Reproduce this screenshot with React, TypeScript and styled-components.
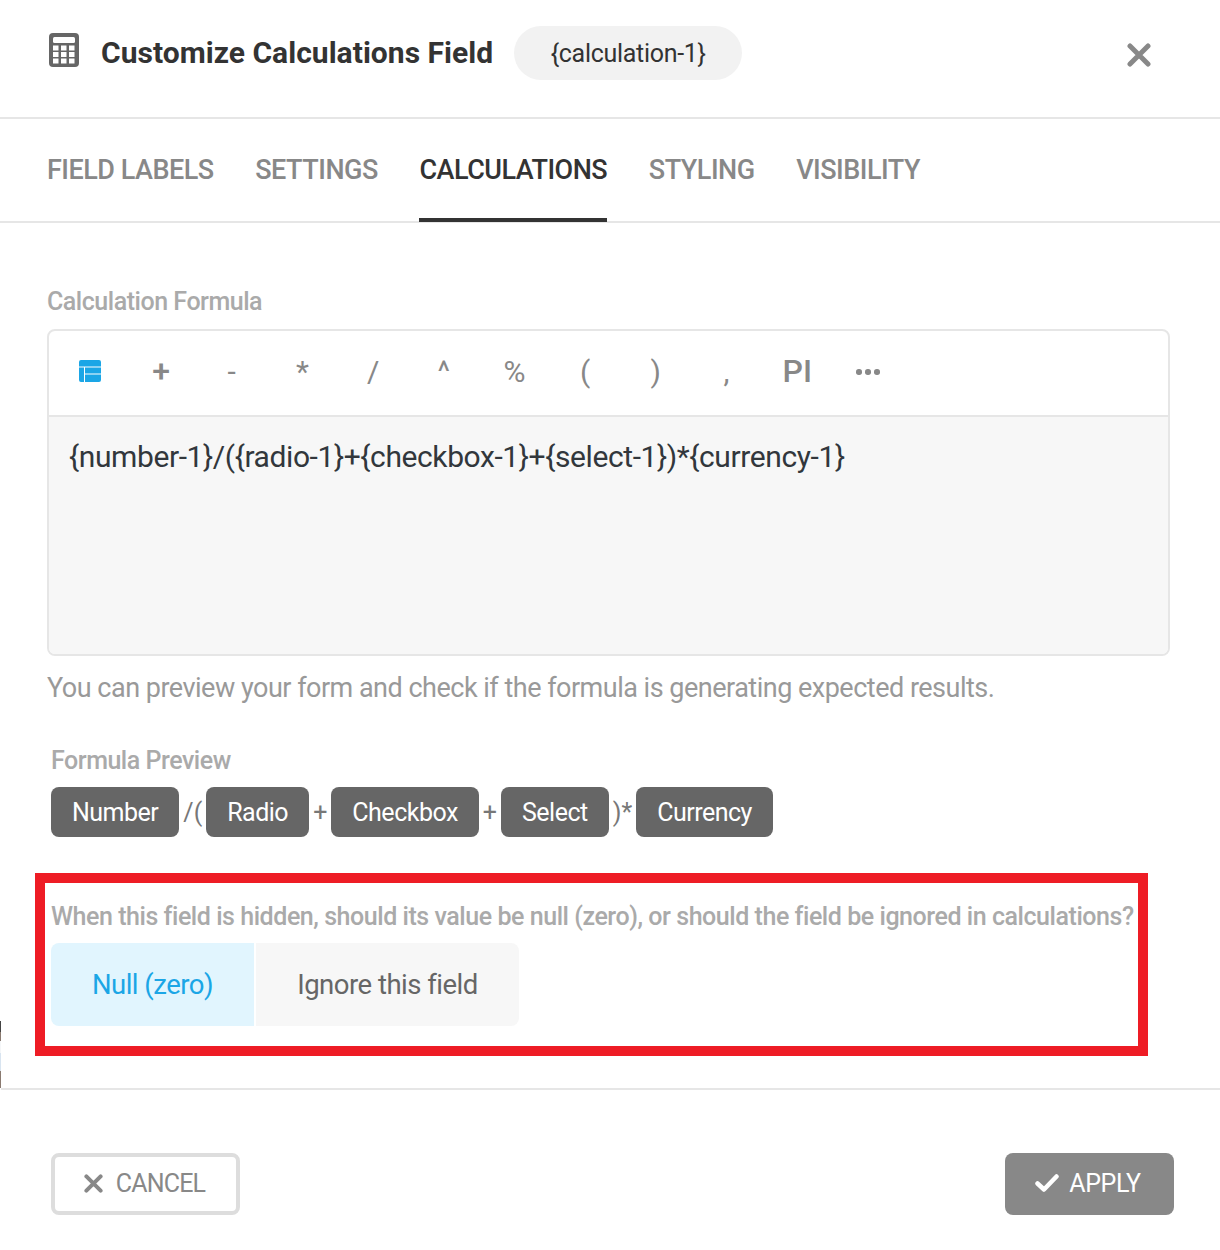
import React from "react";
import styled, { createGlobalStyle } from "styled-components";

const GlobalStyle = createGlobalStyle`
  html, body {
    margin: 0;
    padding: 0;
    background: #fff;
    font-family: Roboto, "Liberation Sans", sans-serif;
  }
  * { box-sizing: border-box; }
`;

const tabs = ["FIELD LABELS", "SETTINGS", "CALCULATIONS", "STYLING", "VISIBILITY"];
const symbols = ["+", "-", "*", "/", "^", "%", "(", ")", ",", "PI"];

const CalculatorIcon = () => (
  <CalcSvg width="30" height="34" viewBox="0 0 30 34">
    <rect width="30" height="34" rx="4" fill="#666" />
    <rect x="4" y="4" width="22" height="6" rx="1.5" fill="#fff" />
    {[12.5, 19, 25.5].map((y) =>
      [4, 12, 20].map((x) => <rect key={`${x}-${y}`} x={x} y={y} width="5.5" height="5" fill="#fff" />)
    )}
  </CalcSvg>
);

const TableIcon = () => (
  <svg width="22" height="22" viewBox="0 0 22 22">
    <path fill="#1ba6e6" d="M2 0h18a2 2 0 0 1 2 2v4.5H0V2a2 2 0 0 1 2-2zM0 7.5h5V22H2a2 2 0 0 1-2-2zM6 7.5h16V13.5H6zM6 14.5h16V20a2 2 0 0 1-2 2H6z" />
  </svg>
);

const CloseIcon = ({ size }: { size: number }) => (
  <svg width={size} height={size} viewBox="0 0 24 24">
    <path d="M3 3l18 18M21 3L3 21" stroke="#888" strokeWidth="5" strokeLinecap="round" fill="none" />
  </svg>
);

const CheckIcon = () => (
  <svg width="24" height="18" viewBox="0 0 24 18">
    <path d="M2.5 9.5l6.5 6L21.5 2.5" stroke="#fff" strokeWidth="4.5" strokeLinecap="round" strokeLinejoin="round" fill="none" />
  </svg>
);

export default function App() {
  return (
    <Page>
      <GlobalStyle />
      <EdgeSliver />
      <Header>
        <CalculatorIcon />
        <Title>Customize Calculations Field</Title>
        <Pill>{"{calculation-1}"}</Pill>
        <CloseButton><CloseIcon size={24} /></CloseButton>
      </Header>
      <Tabs>
        {tabs.map((t) => (
          <Tab key={t} $active={t === "CALCULATIONS"}>{t}</Tab>
        ))}
      </Tabs>
      <Content>
        <FieldLabel $gap={12}>Calculation Formula</FieldLabel>
        <Editor>
          <Toolbar>
            <ToolButton><TableIcon /></ToolButton>
            {symbols.map((s) => (
              <ToolButton key={s} $strong={s === "+" || s === "PI"}>{s}</ToolButton>
            ))}
            <ToolButton>
              <Dots><i /><i /><i /></Dots>
            </ToolButton>
          </Toolbar>
          <Formula>{"{number-1}/({radio-1}+{checkbox-1}+{select-1})*{currency-1}"}</Formula>
        </Editor>
        <Help>You can preview your form and check if the formula is generating expected results.</Help>
        <PreviewBlock>
          <FieldLabel $gap={11}>Formula Preview</FieldLabel>
          <ChipRow>
            <Chip>Number</Chip>
            <Op>/(</Op>
            <Chip>Radio</Chip>
            <Op>+</Op>
            <Chip>Checkbox</Chip>
            <Op>+</Op>
            <Chip>Select</Chip>
            <Op>)*</Op>
            <Chip>Currency</Chip>
          </ChipRow>
        </PreviewBlock>
        <Highlight>
          <Question>When this field is hidden, should its value be null (zero), or should the field be ignored in calculations?</Question>
          <Choices>
            <Choice $selected $width={203}>Null (zero)</Choice>
            <Choice $width={263}>Ignore this field</Choice>
          </Choices>
        </Highlight>
      </Content>
      <Footer>
        <CancelButton><CloseIcon size={19} />CANCEL</CancelButton>
        <ApplyButton><CheckIcon />APPLY</ApplyButton>
      </Footer>
    </Page>
  );
}

const Page = styled.div`
  position: relative;
  width: 1220px;
  height: 1250px;
  overflow: hidden;
  background: #fff;
`;

/* sliver of the page behind the modal, showing at its left edge */
const EdgeSliver = styled.div`
  position: absolute;
  left: 0;
  top: 1021px;
  width: 1px;
  height: 69px;
  background: linear-gradient(
    to bottom,
    #444 0 11px,
    #8a7a70 11px 20px,
    #f4f6f8 20px 32px,
    #d8e4f0 32px 50px,
    #8a7a70 50px 67px,
    #fff 67px
  );
`;

const Header = styled.header`
  height: 119px;
  display: flex;
  align-items: center;
  padding: 0 69px 11px 49px;
  border-bottom: 2px solid #e6e6e6;
`;

const CalcSvg = styled.svg`
  flex: none;
  margin-top: -6px;
`;

const Title = styled.h1`
  margin: -2px 21px 0 22px;
  font-size: 30px;
  font-weight: 700;
  letter-spacing: 0.03px;
  color: #333;
  white-space: nowrap;
`;

const Pill = styled.div`
  width: 228px;
  height: 54px;
  border-radius: 27px;
  background: #f2f2f2;
  color: #333;
  font-size: 25px;
  letter-spacing: -0.3px;
  display: flex;
  align-items: center;
  justify-content: center;
`;

const CloseButton = styled.div`
  margin: 3px 0 0 auto;
  display: flex;
`;

const Tabs = styled.nav`
  height: 104px;
  display: flex;
  gap: 41.6px;
  padding-left: 47px;
  border-bottom: 2px solid #e6e6e6;
`;

const Tab = styled.div<{ $active?: boolean }>`
  height: 103px;
  padding-top: 2px;
  display: flex;
  align-items: center;
  font-size: 27px;
  font-weight: 500;
  letter-spacing: -0.5px;
  white-space: nowrap;
  color: ${(p) => (p.$active ? "#333" : "#888")};
  border-bottom: 4px solid ${(p) => (p.$active ? "#333" : "transparent")};
`;

const Content = styled.main`
  height: 867px;
  padding: 64px 50px 0 47px;
  border-bottom: 2px solid #e6e6e6;
`;

const FieldLabel = styled.div<{ $gap: number }>`
  font-size: 25px;
  line-height: 30px;
  font-weight: 500;
  letter-spacing: -0.47px;
  color: #aaa;
  margin-bottom: ${(p) => p.$gap}px;
`;

const Editor = styled.div`
  height: 327px;
  border: 2px solid #e6e6e6;
  border-radius: 8px;
  overflow: hidden;
  display: flex;
  flex-direction: column;
`;

const Toolbar = styled.div`
  height: 86px;
  flex: none;
  display: flex;
  align-items: center;
  padding-left: 6px;
  border-bottom: 2px solid #e6e6e6;
`;

const ToolButton = styled.div<{ $strong?: boolean }>`
  width: 70.7px;
  height: 100%;
  padding-bottom: 4px;
  display: flex;
  align-items: center;
  justify-content: center;
  font-size: ${(p) => (p.$strong ? "32px" : "30px")};
  font-weight: ${(p) => (p.$strong ? 500 : 400)};
  color: #888;
`;

const Dots = styled.span`
  display: flex;
  gap: 3.5px;
  margin-top: 2px;
  i {
    width: 5.5px;
    height: 5.5px;
    border-radius: 50%;
    background: #888;
  }
`;

const Formula = styled.div`
  flex: 1;
  background: #f7f7f7;
  padding: 22px 20px;
  font-size: 30px;
  letter-spacing: -0.4px;
  line-height: 36px;
  color: #32373c;
`;

const Help = styled.p`
  margin: 15px 0 0;
  font-size: 27px;
  letter-spacing: -0.5px;
  line-height: 34px;
  color: #999;
`;

const PreviewBlock = styled.section`
  margin-top: 41px;
  padding-left: 4px;
`;

const ChipRow = styled.div`
  display: flex;
  align-items: center;
  gap: 4px;
`;

const Chip = styled.span`
  height: 50px;
  padding: 0 21px;
  border-radius: 8px;
  background: #666;
  color: #fff;
  font-size: 25px;
  letter-spacing: -0.5px;
  display: flex;
  align-items: center;
`;

const Op = styled.span`
  font-size: 25px;
  color: #777;
`;

const Highlight = styled.section`
  width: 1113px;
  height: 183px;
  margin: 36px 0 0 -12px;
  padding: 18px 0 0 6px;
  border: 10px solid #ee1c25;
`;

const Question = styled.div`
  font-size: 25px;
  line-height: 32px;
  font-weight: 500;
  letter-spacing: -0.45px;
  color: #aaa;
  white-space: nowrap;
  margin-bottom: 10px;
`;

const Choices = styled.div`
  display: flex;
  gap: 2px;
`;

const Choice = styled.div<{ $selected?: boolean; $width: number }>`
  width: ${(p) => p.$width}px;
  height: 83px;
  display: flex;
  align-items: center;
  justify-content: center;
  font-size: 27.5px;
  letter-spacing: -0.5px;
  color: ${(p) => (p.$selected ? "#1ba6e6" : "#666")};
  background: ${(p) => (p.$selected ? "#e1f5fe" : "#f7f7f7")};
  border-radius: ${(p) => (p.$selected ? "8px 0 0 8px" : "0 8px 8px 0")};
`;

const Footer = styled.footer`
  height: 158px;
  display: flex;
  justify-content: space-between;
  padding: 63px 46px 0 51px;
`;

const CancelButton = styled.div`
  width: 189px;
  height: 62px;
  padding: 0 2px 2px 0;
  border: 4px solid #ddd;
  border-radius: 8px;
  display: flex;
  align-items: center;
  justify-content: center;
  gap: 13px;
  font-size: 25px;
  letter-spacing: -0.8px;
  color: #888;
`;

const ApplyButton = styled.div`
  width: 169px;
  height: 62px;
  padding: 0 3px 2px 0;
  border-radius: 8px;
  background: #888;
  display: flex;
  align-items: center;
  justify-content: center;
  gap: 10px;
  font-size: 25px;
  letter-spacing: -0.4px;
  color: #fff;
`;
